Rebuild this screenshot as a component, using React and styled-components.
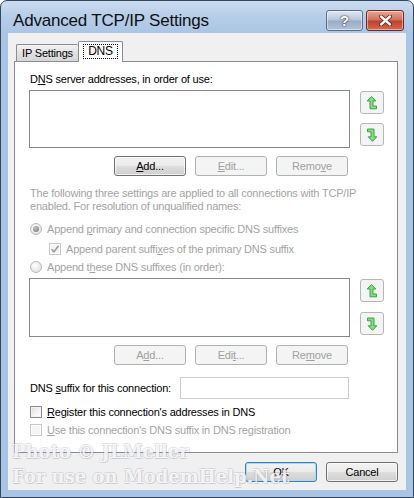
import React from "react";
import styled, { createGlobalStyle, css } from "styled-components";

const GlobalStyle = createGlobalStyle`
  html, body {
    margin: 0;
    padding: 0;
    background: #ffffff;
  }
  * {
    box-sizing: border-box;
  }
`;

const Window = styled.div`
  position: relative;
  width: 414px;
  height: 498px;
  display: flex;
  flex-direction: column;
  padding: 0 7px 7px;
  border: 1px solid #34475c;
  border-radius: 7px 7px 0 0;
  background: linear-gradient(#c9dbef 0px, #b4cce8 18px, #a9c4e4 34px, #a9c4e4 100%);
  font-family: "Liberation Sans", Arial, sans-serif;
  letter-spacing: -0.2px;
  overflow: hidden;
`;

const TitleBar = styled.div`
  height: 32px;
  display: flex;
  align-items: flex-start;
  justify-content: space-between;
  padding: 9px 2px 0 5px;
`;

const Title = styled.div`
  font-family: "Liberation Sans", Arial, sans-serif;
  font-size: 17px;
  line-height: 21px;
  color: #101010;
  letter-spacing: -0.2px;
`;

const CaptionButtons = styled.div`
  display: flex;
  gap: 3px;
`;

const CapBtn = styled.div`
  width: ${(p) => (p.$close ? 38 : 37)}px;
  height: 21px;
  border-radius: 3px;
  display: flex;
  align-items: center;
  justify-content: center;
  color: #ffffff;
  font-weight: bold;
  font-size: 15px;
  text-shadow: 0 0 2px #333, 0 0 1px #333;
  border: 1px solid ${(p) => (p.$close ? "#6e2a22" : "#5b6f86")};
  background: ${(p) =>
    p.$close
      ? "linear-gradient(#e8a597 0%, #d1725f 45%, #c0432c 55%, #d4694f 100%)"
      : "linear-gradient(#dfe8f2 0%, #b8c8da 45%, #98adc5 55%, #b1c3d7 100%)"};
  box-shadow: inset 0 0 0 1px rgba(255, 255, 255, 0.45);
`;

const Client = styled.div`
  flex: 1;
  display: flex;
  flex-direction: column;
  background: #f0f0f0;
  padding: 8px 8px 0 6px;
`;

const Tabs = styled.div`
  height: 20px;
  display: flex;
  align-items: flex-end;
  padding-left: 2px;
`;

const Tab = styled.div`
  font-size: 11px;
  color: #000;
  display: flex;
  align-items: center;
  justify-content: center;
  border: 1px solid #898c95;
  border-bottom: none;
  border-radius: 2px 2px 0 0;
  ${(p) =>
    p.$active
      ? css`
          position: relative;
          z-index: 1;
          width: 45px;
          height: 21px;
          margin-bottom: -1px;
          background: #ffffff;
          padding-bottom: 2px;
        `
      : css`
          width: 62px;
          height: 17px;
          background: linear-gradient(#f3f3f3, #e2e2e2 50%, #d6d6d6);
          border-right: none;
        `}
`;

const Focus = styled.span`
  border: 1px dotted #000;
  padding: 0 4px;
  line-height: 13px;
  font-size: 12px;
`;

const Panel = styled.div`
  height: 392px;
  border: 1px solid #898c95;
  background: #ffffff;
  padding: 11px 0 0 15px;
  display: flex;
  flex-direction: column;
`;

const Label = styled.div`
  font-size: 11px;
  line-height: 13px;
  color: ${(p) => (p.$disabled ? "#a3a3a3" : "#000")};
  margin-top: ${(p) => p.$mt || 0}px;
  white-space: nowrap;
`;

const Key = styled.span`
  text-decoration: underline;
  text-underline-offset: 1px;
`;

const ListRow = styled.div`
  display: flex;
  gap: 10px;
  margin-top: ${(p) => p.$mt}px;
  margin-left: -1px;
`;

const ListBox = styled.div`
  width: 321px;
  height: ${(p) => p.$h}px;
  border: 1px solid #828790;
  background: #ffffff;
`;

const ArrowCol = styled.div`
  display: flex;
  flex-direction: column;
  gap: ${(p) => p.$gap}px;
  padding-top: 1px;
`;

const ArrowBtn = styled.div`
  width: 24px;
  height: 23px;
  border: 1px solid #b6b6b6;
  border-radius: 3px;
  background: #f4f4f4;
  display: flex;
  align-items: center;
  justify-content: center;
`;

const ButtonRow = styled.div`
  width: 321px;
  margin-left: -1px;
  display: flex;
  justify-content: flex-end;
  gap: 9px;
  padding-right: 2px;
  margin-top: ${(p) => p.$mt}px;
`;

const Button = styled.div`
  width: 72px;
  height: 20px;
  border-radius: 3px;
  font-size: 11px;
  display: flex;
  align-items: center;
  justify-content: center;
  ${(p) =>
    p.$disabled
      ? css`
          border: 1px solid #adb2b5;
          background: #f4f4f4;
          color: #a0a0a0;
        `
      : css`
          border: 1px solid ${p.$default ? "#3c7fb1" : "#707070"};
          background: linear-gradient(#f2f2f2 0%, #ebebeb 48%, #dddddd 52%, #cfcfcf 100%);
          color: #000;
          box-shadow: inset 0 0 0 1px ${p.$default ? "#a7dcf7" : "rgba(255,255,255,0.7)"};
        `}
`;

const OptionRow = styled.div`
  display: flex;
  align-items: center;
  height: 15px;
  gap: 5px;
  margin-top: ${(p) => p.$mt || 0}px;
  margin-left: ${(p) => p.$ml || 0}px;
  font-size: 11px;
  color: ${(p) => (p.$disabled ? "#a3a3a3" : "#000")};
  white-space: nowrap;
`;

const Radio = styled.span`
  width: 12px;
  height: 12px;
  border-radius: 50%;
  border: 1px solid #b8b8b8;
  background: radial-gradient(circle at 40% 35%, #ffffff, #e6e6e6 70%, #d8d8d8);
  display: flex;
  align-items: center;
  justify-content: center;
  flex: none;
  &::after {
    content: "";
    display: ${(p) => (p.$checked ? "block" : "none")};
    width: 6px;
    height: 6px;
    border-radius: 50%;
    background: radial-gradient(circle at 40% 35%, #c4c4c4, #8a8a8a 70%, #777);
  }
`;

const Check = styled.span`
  width: 12px;
  height: 12px;
  border: 1px solid ${(p) => (p.$disabled ? "#c8c8c8" : "#8f8f8f")};
  background: ${(p) =>
    p.$disabled ? "#f4f4f4" : "linear-gradient(135deg, #dcdcdc, #f6f6f6 60%, #ffffff)"};
  box-shadow: inset 0 0 0 1px ${(p) => (p.$disabled ? "#ffffff" : "#f2f2f2")};
  display: flex;
  align-items: center;
  justify-content: center;
  flex: none;
`;

const SuffixRow = styled.div`
  display: flex;
  align-items: center;
  margin-top: 12px;
  font-size: 11px;
`;

const SuffixLabel = styled.span`
  width: 150px;
`;

const TextInput = styled.div`
  width: 169px;
  height: 22px;
  border: 1px solid #c9ccd2;
  background: #ffffff;
`;

const Footer = styled.div`
  display: flex;
  justify-content: flex-end;
  gap: 9px;
  margin-top: 9px;
`;

const Watermark = styled.div`
  position: absolute;
  left: 11px;
  top: 438px;
  font-family: "DejaVu Serif", "Liberation Serif", serif;
  font-weight: bold;
  font-size: 18px;
  line-height: 25px;
  letter-spacing: 0;
  color: rgba(252, 252, 255, 0.85);
  text-shadow: 1px 1px 0 rgba(120, 120, 130, 0.22), -1px -1px 0 rgba(120, 120, 130, 0.14),
    1px -1px 0 rgba(120, 120, 130, 0.12), -1px 1px 0 rgba(120, 120, 130, 0.12);
  pointer-events: none;
  white-space: nowrap;
`;

const UpArrow = () => (
  <svg width="12" height="14" viewBox="0 0 12 14">
    <polygon
      points="5.5,0.5 9.8,5 7,5 7,10 10.5,10 10.5,12.8 4,12.8 4,5 1.2,5"
      fill="#80e07f"
      stroke="#2f9a37"
      strokeWidth="0.9"
      strokeLinejoin="round"
    />
  </svg>
);

const DownArrow = () => (
  <svg width="12" height="14" viewBox="0 0 12 14">
    <polygon
      points="6.5,13.3 2.2,8.8 5,8.8 5,3.8 1.5,3.8 1.5,1 8,1 8,8.8 10.8,8.8"
      fill="#80e07f"
      stroke="#2f9a37"
      strokeWidth="0.9"
      strokeLinejoin="round"
    />
  </svg>
);

const Tick = () => (
  <svg width="10" height="10" viewBox="0 0 10 10">
    <path d="M1.5 5.2 L4 7.8 L8.6 1.8" fill="none" stroke="#9a9a9a" strokeWidth="1.5" />
  </svg>
);

const CloseX = () => (
  <svg width="13" height="11" viewBox="0 0 13 11">
    <path
      d="M2 1.5 L11 9.5 M11 1.5 L2 9.5"
      stroke="#5a1a12"
      strokeWidth="4"
      strokeLinecap="round"
    />
    <path d="M2 1.5 L11 9.5 M11 1.5 L2 9.5" stroke="#ffffff" strokeWidth="2.4" strokeLinecap="round" />
  </svg>
);

function ListWithArrows({ mt, h, gap }) {
  return (
    <ListRow $mt={mt}>
      <ListBox $h={h} />
      <ArrowCol $gap={gap}>
        <ArrowBtn>
          <UpArrow />
        </ArrowBtn>
        <ArrowBtn>
          <DownArrow />
        </ArrowBtn>
      </ArrowCol>
    </ListRow>
  );
}

export default function App() {
  return (
    <>
      <GlobalStyle />
      <Window>
        <TitleBar>
          <Title>Advanced TCP/IP Settings</Title>
          <CaptionButtons>
            <CapBtn>?</CapBtn>
            <CapBtn $close>
              <CloseX />
            </CapBtn>
          </CaptionButtons>
        </TitleBar>
        <Client>
          <Tabs>
            <Tab>IP Settings</Tab>
            <Tab $active>
              <Focus>DNS</Focus>
            </Tab>
          </Tabs>
          <Panel>
            <Label>
              D<Key>N</Key>S server addresses, in order of use:
            </Label>
            <ListWithArrows mt={4} h={58} gap={9} />
            <ButtonRow $mt={8}>
              <Button>
                <span>
                  <Key>A</Key>dd...
                </span>
              </Button>
              <Button $disabled>
                <span>
                  <Key>E</Key>dit...
                </span>
              </Button>
              <Button $disabled>
                <span>
                  Remo<Key>v</Key>e
                </span>
              </Button>
            </ButtonRow>
            <Label $disabled $mt={11}>
              The following three settings are applied to all connections with TCP/IP
              <br />
              enabled. For resolution of unqualified names:
            </Label>
            <OptionRow $disabled $mt={8}>
              <Radio $checked />
              <span>
                Append <Key>p</Key>rimary and connection specific DNS suffixes
              </span>
            </OptionRow>
            <OptionRow $disabled $mt={5} $ml={19}>
              <Check $disabled>
                <Tick />
              </Check>
              <span>
                Append parent suffi<Key>x</Key>es of the primary DNS suffix
              </span>
            </OptionRow>
            <OptionRow $disabled $mt={3}>
              <Radio />
              <span>
                Append t<Key>h</Key>ese DNS suffixes (in order):
              </span>
            </OptionRow>
            <ListWithArrows mt={4} h={59} gap={10} />
            <ButtonRow $mt={8}>
              <Button $disabled>
                <span>
                  A<Key>d</Key>d...
                </span>
              </Button>
              <Button $disabled>
                <span>
                  Edi<Key>t</Key>...
                </span>
              </Button>
              <Button $disabled>
                <span>
                  Re<Key>m</Key>ove
                </span>
              </Button>
            </ButtonRow>
            <SuffixRow>
              <SuffixLabel>
                DNS <Key>s</Key>uffix for this connection:
              </SuffixLabel>
              <TextInput />
            </SuffixRow>
            <OptionRow $mt={5}>
              <Check />
              <span>
                <Key>R</Key>egister this connection's addresses in DNS
              </span>
            </OptionRow>
            <OptionRow $disabled $mt={3}>
              <Check $disabled />
              <span>
                <Key>U</Key>se this connection's DNS suffix in DNS registration
              </span>
            </OptionRow>
          </Panel>
          <Footer>
            <Button $default>OK</Button>
            <Button>Cancel</Button>
          </Footer>
        </Client>
        <Watermark>
          Photo © JLMeller
          <br />
          For use on ModemHelp.Net
        </Watermark>
      </Window>
    </>
  );
}
